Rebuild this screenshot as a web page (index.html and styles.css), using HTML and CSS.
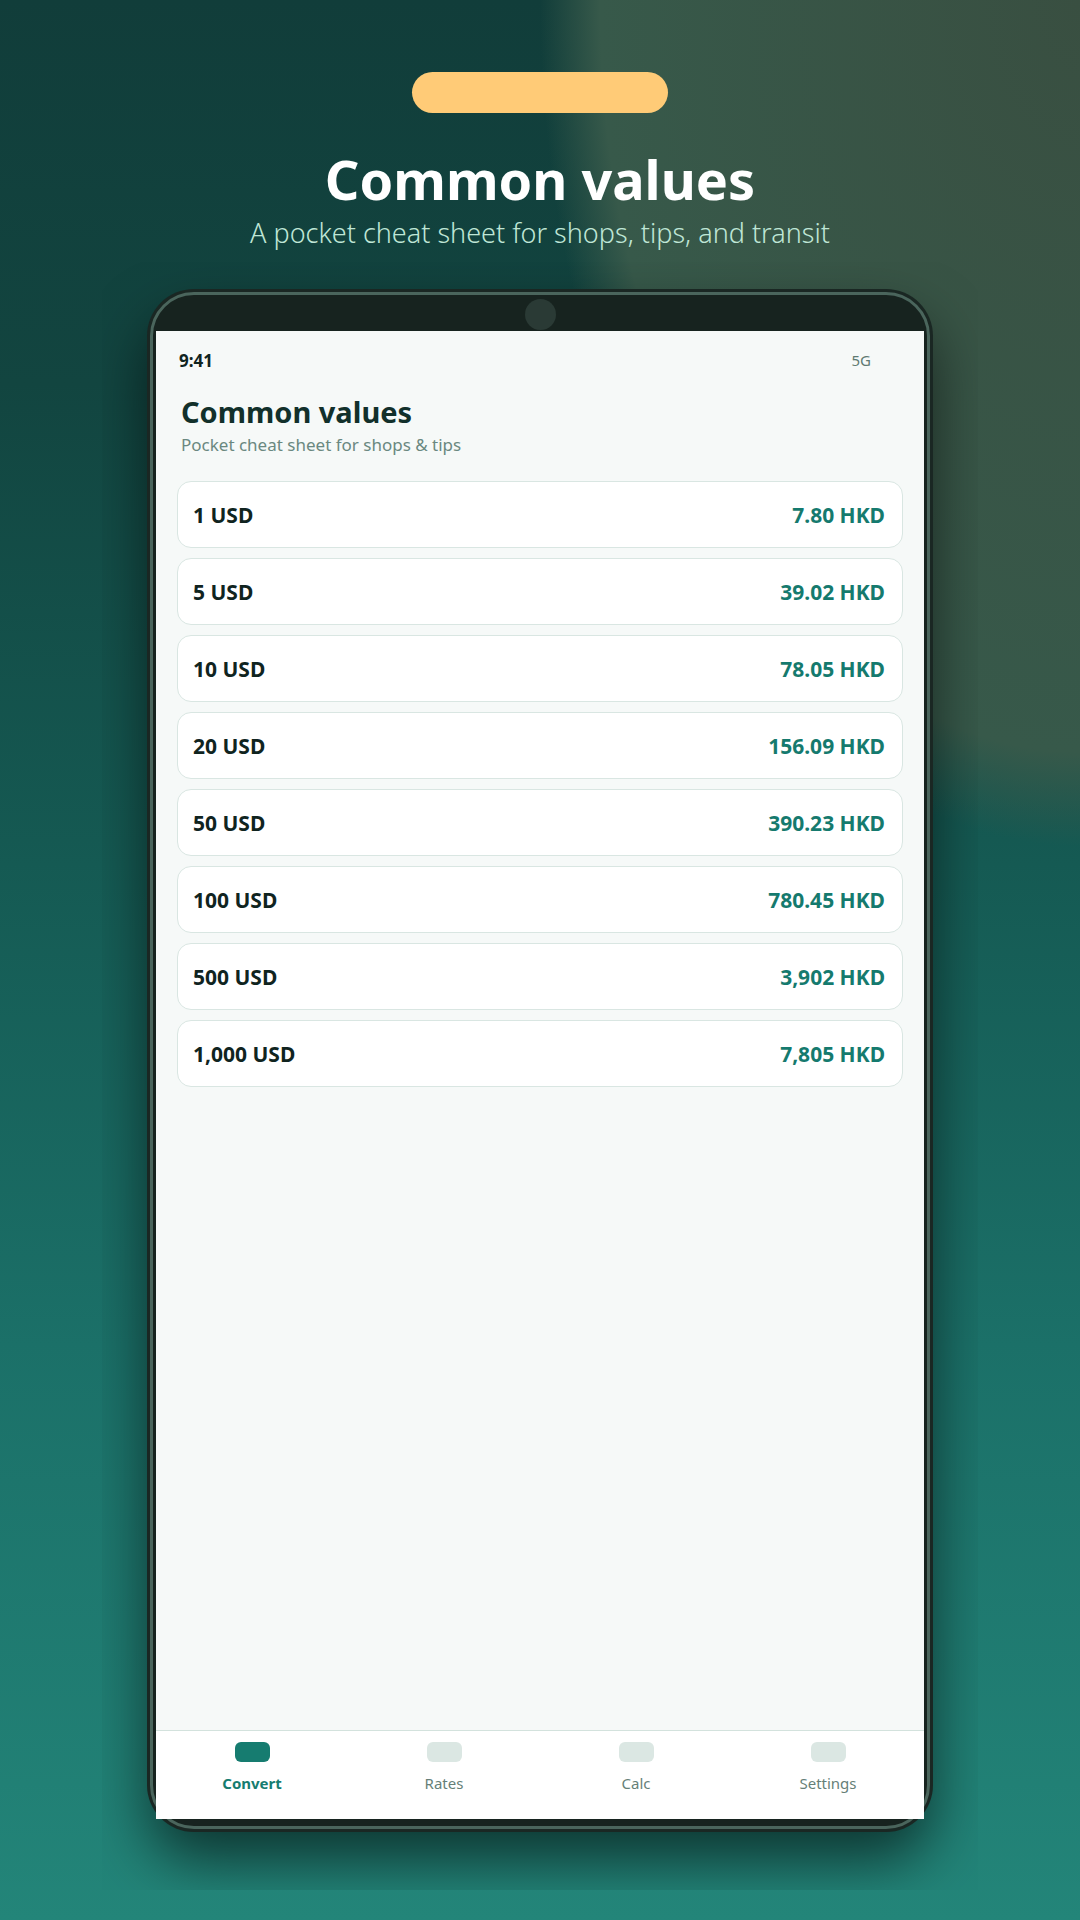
FILE: index.html
```html
<!DOCTYPE html>
<html lang="en">
<head>
<meta charset="utf-8">
<title>Common values</title>
<link rel="stylesheet" href="styles.css">
</head>
<body>
<div class="page">
  <div class="pill"></div>
  <h1 class="title">Common values</h1>
  <p class="subtitle">A pocket cheat sheet for shops, tips, and transit</p>
  <div class="stage">
    <div class="phone">
      <div class="camera"></div>
      <div class="screen">
        <div class="status">
          <span class="time">9:41</span>
          <span class="net">5G</span>
        </div>
        <div class="head">
          <h2 class="head-title">Common values</h2>
          <p class="head-sub">Pocket cheat sheet for shops &amp; tips</p>
        </div>
        <ul class="list">
          <li class="row"><span class="from">1 USD</span><span class="to">7.80 HKD</span></li>
          <li class="row"><span class="from">5 USD</span><span class="to">39.02 HKD</span></li>
          <li class="row"><span class="from">10 USD</span><span class="to">78.05 HKD</span></li>
          <li class="row"><span class="from">20 USD</span><span class="to">156.09 HKD</span></li>
          <li class="row"><span class="from">50 USD</span><span class="to">390.23 HKD</span></li>
          <li class="row"><span class="from">100 USD</span><span class="to">780.45 HKD</span></li>
          <li class="row"><span class="from">500 USD</span><span class="to">3,902 HKD</span></li>
          <li class="row"><span class="from">1,000 USD</span><span class="to">7,805 HKD</span></li>
        </ul>
        <nav class="tabbar">
          <div class="tab active"><span class="tab-icon"></span><span class="tab-label">Convert</span></div>
          <div class="tab"><span class="tab-icon"></span><span class="tab-label">Rates</span></div>
          <div class="tab"><span class="tab-icon"></span><span class="tab-label">Calc</span></div>
          <div class="tab"><span class="tab-icon"></span><span class="tab-label">Settings</span></div>
        </nav>
      </div>
    </div>
  </div>
</div>
</body>
</html>
```

FILE: styles.css
```css
* { box-sizing: border-box; }

html, body {
  margin: 0;
  padding: 0;
}

body {
  width: 1080px;
  height: 1920px;
  overflow: hidden;
  font-family: "Noto Sans", "Open Sans", sans-serif;
  background:
    radial-gradient(ellipse 600px 940px at 100% 0%, #394f41 0%, #37594a 80%, rgba(55, 89, 74, 0) 90%),
    linear-gradient(180deg, #113d3a 0%, #124540 20%, #155a53 45%, #1b7068 70%, #238579 100%);
}

.page {
  display: flex;
  flex-direction: column;
  align-items: center;
  padding-top: 72px;
}

.pill {
  width: 256px;
  height: 41px;
  border-radius: 21px;
  background: #ffcb77;
}

.title {
  margin: 34px 0 0;
  font-size: 54px;
  line-height: 64px;
  font-weight: 700;
  color: #ffffff;
}

.subtitle {
  margin: 6px 0 0;
  font-size: 27px;
  line-height: 32px;
  font-weight: 300;
  color: #bfe6d6;
}

.stage {
  margin-top: 13px;
  width: 876px;
  height: 1628px;
  padding: 30px 48px 0;
  overflow: hidden;
  display: flex;
  justify-content: center;
}

.phone {
  position: relative;
  width: 780px;
  height: 1537px;
  padding: 36px 3px 7px;
  border: 3px solid #4a655c;
  border-radius: 44px;
  background: #17231f;
  box-shadow: 0 0 0 3px #1a2723, 0 30px 60px rgba(0, 0, 0, 0.6);
}

.camera {
  position: absolute;
  left: 50%;
  top: 4px;
  width: 31px;
  height: 31px;
  margin-left: -15.5px;
  border-radius: 50%;
  background: #2a3a35;
}

.screen {
  position: relative;
  width: 768px;
  height: 1488px;
  background: #f6f9f8;
  display: flex;
  flex-direction: column;
}

.status {
  height: 58px;
  display: flex;
  align-items: center;
  justify-content: space-between;
  padding: 0 53px 0 23px;
}

.time {
  font-size: 17px;
  font-weight: 700;
  color: #10241f;
}

.net {
  font-size: 15px;
  color: #5f7a72;
}

.head {
  padding: 5px 25px 0;
}

.head-title {
  margin: 0;
  font-size: 29px;
  line-height: 36px;
  font-weight: 700;
  color: #12302b;
}

.head-sub {
  margin: 4px 0 0;
  font-size: 17px;
  line-height: 22px;
  color: #6a8880;
}

.list {
  list-style: none;
  margin: 25px 0 0;
  padding: 0 21px;
  display: flex;
  flex-direction: column;
  gap: 10px;
}

.row {
  height: 67px;
  display: flex;
  align-items: center;
  justify-content: space-between;
  padding: 0 17px 0 15px;
  background: #ffffff;
  border: 1px solid #d9e6e2;
  border-radius: 14px;
  font-size: 21px;
  font-weight: 700;
}

.from { color: #10241f; }
.to { color: #157a6e; }

.tabbar {
  margin-top: auto;
  height: 89px;
  background: #ffffff;
  border-top: 1px solid #d3e2dd;
  display: grid;
  grid-template-columns: repeat(4, 1fr);
}

.tab {
  display: flex;
  flex-direction: column;
  align-items: center;
  padding-top: 11px;
  gap: 11px;
}

.tab-icon {
  width: 35px;
  height: 20px;
  border-radius: 6px;
  background: #dbe7e3;
}

.tab-label {
  font-size: 15px;
  line-height: 20px;
  color: #667f78;
}

.tab.active .tab-icon { background: #167c70; }
.tab.active .tab-label { color: #167c70; font-weight: 700; }
```
